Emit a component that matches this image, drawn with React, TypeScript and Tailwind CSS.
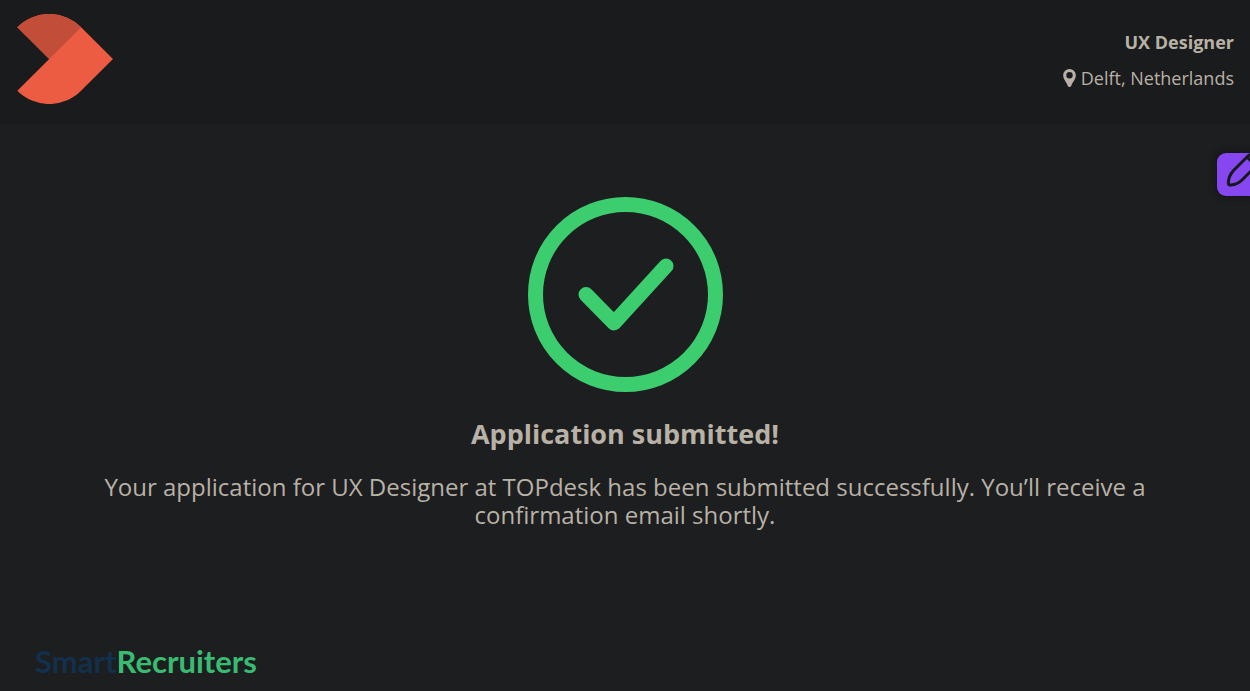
const job = {
  title: 'UX Designer',
  company: 'TOPdesk',
  location: 'Delft, Netherlands',
};

function CompanyLogo() {
  return (
    <svg viewBox="0 0 98 90" className="h-[90px] w-[98px]" role="img" aria-label={job.company}>
      <path d="M1.3 13.2A45 45 0 0 1 65.1 13.2L97 45L65.1 76.8A45 45 0 0 1 1.3 76.8L33.2 45Z" fill="#eb5c43" />
      <path d="M1.3 13.2A45 45 0 0 1 65.1 13.2L33.2 45Z" fill="#c24d38" />
    </svg>
  );
}

function PinIcon() {
  return (
    <svg viewBox="0 0 13 18" className="h-[18px] w-[13px]" fill="currentColor" aria-hidden="true">
      <path fillRule="evenodd" d="M6.5 0A6.3 6.3 0 0 0 0.2 6.3C0.2 10.5 3.6 13.4 4.8 16.9Q5.2 18 6.5 18T8.2 16.9C9.4 13.4 12.8 10.5 12.8 6.3A6.3 6.3 0 0 0 6.5 0ZM6.5 3A3.2 3.2 0 1 1 6.5 9.4A3.2 3.2 0 0 1 6.5 3Z" />
    </svg>
  );
}

function SuccessIcon() {
  return (
    <svg viewBox="0 0 195 195" className="size-[195px]" fill="none" stroke="#3bcd6e" strokeWidth="15" aria-hidden="true">
      <circle cx="97.5" cy="97.5" r="90" />
      <path d="M58 97.5L86 126L138 69" strokeLinecap="round" strokeLinejoin="round" />
    </svg>
  );
}

function EditButton() {
  return (
    <button
      type="button"
      aria-label="Edit"
      className="absolute top-[153px] right-0 h-[43px] w-[33px] overflow-hidden rounded-l-[9px] bg-[#8647f0] shadow-[0_0_5px_3px_#17181a]"
    >
      <svg viewBox="0 0 33 43" className="h-[43px] w-[33px]" fill="none" stroke="#17181b" strokeWidth="3" strokeLinejoin="round" aria-hidden="true">
        <path d="M36 0L31 3L16.5 17.5Q11.5 23 11.3 30Q11.4 32.5 14 32Q20.5 31.5 25 27L38 14M29.5 3.5L36 10" />
      </svg>
    </button>
  );
}

export default function App() {
  return (
    <div className="relative flex min-h-screen flex-col overflow-hidden bg-[#1d1e20] font-['Open_Sans',sans-serif] text-[#b8b1a6]">
      <header className="flex items-start justify-between bg-[#1a1b1c] px-4 pt-3.5 pb-5">
        <CompanyLogo />
        <div className="flex flex-col items-end gap-3 pt-4 text-lg leading-6">
          <p className="font-bold">{job.title}</p>
          <p className="flex items-center gap-[5px]">
            <PinIcon />
            {job.location}
          </p>
        </div>
      </header>

      <EditButton />

      <main className="flex grow flex-col items-center px-20 pt-[73px] text-center">
        <SuccessIcon />
        <h1 className="mt-6 text-[27px] leading-9 font-bold">Application submitted!</h1>
        <p className="mt-[21px] text-2xl leading-7">
          {`Your application for ${job.title} at ${job.company} has been submitted successfully. You’ll receive a confirmation email shortly.`}
        </p>
      </main>

      <footer className="px-[35px] pb-3">
        <a href="#" className="font-['Lato',sans-serif] text-[31px] leading-8 font-bold text-[#3abb72]">
          <span className="text-[#12304b]">Smart</span>Recruiters
        </a>
      </footer>
    </div>
  );
}
